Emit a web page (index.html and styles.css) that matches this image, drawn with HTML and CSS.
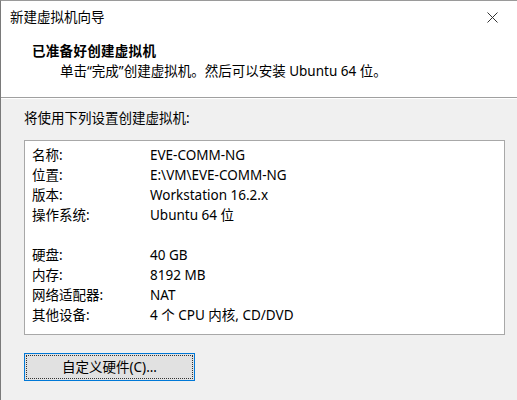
FILE: index.html
```html
<!DOCTYPE html>
<html lang="zh-CN">
<head>
<meta charset="utf-8">
<title>新建虚拟机向导</title>
<link rel="stylesheet" href="styles.css">
</head>
<body>
<div class="dialog">
  <div class="header">
    <div class="titlebar">
      <span class="title">新建虚拟机向导</span>
      <span class="close" aria-label="关闭">
        <svg width="11" height="11" viewBox="0 0 11 11"><path d="M0.5 0.5 L10.5 10.5 M10.5 0.5 L0.5 10.5" stroke="#333" stroke-width="1" fill="none"/></svg>
      </span>
    </div>
    <div class="heading">已准备好创建虚拟机</div>
    <div class="subheading">单击“完成”创建虚拟机。然后可以安装 Ubuntu 64 位。</div>
  </div>
  <div class="body">
    <div class="intro">将使用下列设置创建虚拟机:</div>
    <div class="listbox">
      <div class="group">
        <div class="row"><span class="label">名称:</span><span class="value">EVE-COMM-NG</span></div>
        <div class="row"><span class="label">位置:</span><span class="value">E:\VM\EVE-COMM-NG</span></div>
        <div class="row"><span class="label">版本:</span><span class="value">Workstation 16.2.x</span></div>
        <div class="row"><span class="label">操作系统:</span><span class="value">Ubuntu 64 位</span></div>
      </div>
      <div class="group">
        <div class="row"><span class="label">硬盘:</span><span class="value">40 GB</span></div>
        <div class="row"><span class="label">内存:</span><span class="value">8192 MB</span></div>
        <div class="row"><span class="label">网络适配器:</span><span class="value">NAT</span></div>
        <div class="row"><span class="label">其他设备:</span><span class="value">4 个 CPU 内核, CD/DVD</span></div>
      </div>
    </div>
    <div class="actions">
      <button class="btn"><span class="btn-focus">自定义硬件(C)...</span></button>
    </div>
  </div>
</div>
</body>
</html>
```

FILE: styles.css
```css
html, body {
  margin: 0;
  padding: 0;
  background: #f0f0f0;
}
body {
  font-family: "Noto Sans", "Noto Sans CJK SC", sans-serif;
  font-size: 13.5px;
  color: #000;
  width: 517px;
  height: 400px;
  overflow: hidden;
}
.dialog {
  border-left: 1px solid #7a7a7a;
  border-top: 1px solid #9a9a9a;
  height: 399px;
  background: #f0f0f0;
}
.header {
  background: #fff;
  height: 97px;
  border-bottom: 1px solid #a0a0a0;
  box-shadow: 0 1px 0 #fff;
  box-sizing: border-box;
}
.titlebar {
  height: 32px;
  display: flex;
  align-items: center;
  justify-content: space-between;
  padding: 0 19px 0 9px;
}
.title {
  line-height: 20px;
}
.close {
  display: flex;
  width: 11px;
  height: 11px;
}
.heading {
  font-weight: bold;
  line-height: 20px;
  padding-left: 31px;
  margin-top: 8px;
  letter-spacing: 0.3px;
}
.subheading {
  line-height: 20px;
  padding-left: 59px;
}
.body {
  padding: 10px 12px 0 23px;
}
.intro {
  line-height: 20px;
}
.listbox {
  margin-top: 12px;
  background: #fff;
  border: 1px solid #a8a8a8;
  height: 195px;
  box-sizing: border-box;
  padding: 4px 0 0 7px;
  display: flex;
  flex-direction: column;
  gap: 20px;
}
.row {
  display: grid;
  grid-template-columns: 118px 1fr;
  line-height: 20px;
  height: 20px;
}
.actions {
  margin-top: 18px;
}
.btn {
  width: 171px;
  height: 28px;
  border: 1px solid #0078d7;
  background: #e1e1e1;
  padding: 1px;
  margin: 0;
  font: inherit;
  color: #000;
  display: flex;
}
.btn-focus {
  flex: 1;
  border: 1px dotted #333;
  display: flex;
  align-items: center;
  justify-content: center;
  line-height: 20px;
}
```
